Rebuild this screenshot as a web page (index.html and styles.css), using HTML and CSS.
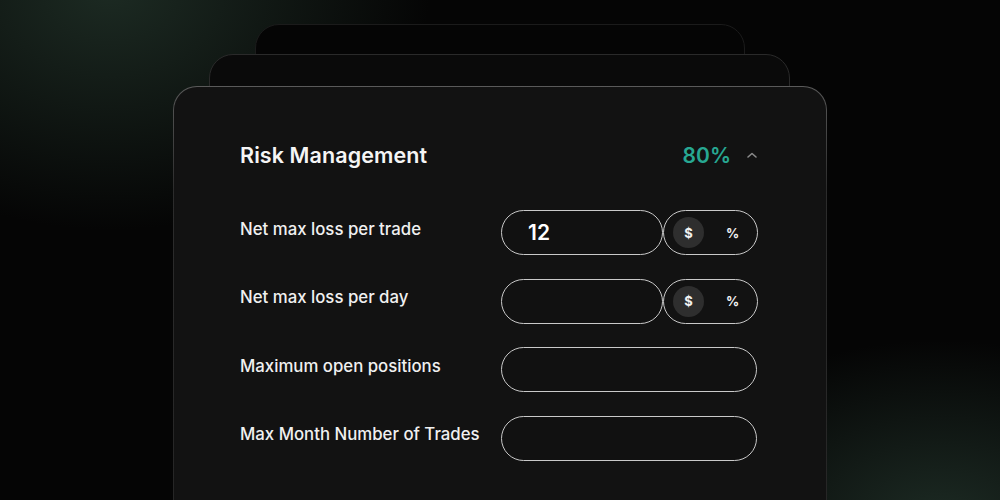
FILE: index.html
```html
<!DOCTYPE html>
<html>
<head>
  <title>Risk Management</title>
  <link rel="stylesheet" href="styles.css">
</head>
<body>
  <div class="stage">
    <div class="ghost ghost-back"></div>
    <div class="ghost ghost-mid"></div>

    <div class="card">
      <div class="card-head">
        <h2 class="card-title">Risk Management</h2>
        <div class="card-status">
          <span class="percent">80%</span>
          <svg class="chevron" width="12" height="8" viewBox="0 0 12 8">
            <path d="M2 6 L6 2.5 L10 6" fill="none" stroke="#8a8a8a" stroke-width="1.6" stroke-linecap="round" stroke-linejoin="round"/>
          </svg>
        </div>
      </div>

      <form class="rules" action="#">
        <label class="rule-label" for="id_trade">Net max loss per trade</label>
        <div class="field split">
          <input class="pill" type="text" id="id_trade" value="12">
          <div class="unit-toggle">
            <span class="unit active">$</span>
            <span class="unit">%</span>
          </div>
        </div>

        <label class="rule-label" for="id_day">Net max loss per day</label>
        <div class="field split">
          <input class="pill" type="text" id="id_day">
          <div class="unit-toggle">
            <span class="unit active">$</span>
            <span class="unit">%</span>
          </div>
        </div>

        <label class="rule-label" for="id_open">Maximum open positions</label>
        <div class="field">
          <input class="pill" type="text" id="id_open">
        </div>

        <label class="rule-label" for="id_month">Max Month Number of Trades</label>
        <div class="field">
          <input class="pill" type="text" id="id_month">
        </div>
      </form>
    </div>
  </div>
</body>
</html>
```

FILE: styles.css
```css
body {
  margin: 0;
  width: 1000px;
  height: 500px;
  overflow: hidden;
  font-family: Inter, "Noto Sans", sans-serif;
  color: #f2f2f2;
  background:
    radial-gradient(ellipse 320px 240px at 110px -10px, rgba(38, 58, 47, 0.7), rgba(38, 58, 47, 0) 100%),
    radial-gradient(ellipse 280px 180px at 940px 520px, rgba(38, 58, 48, 0.7), rgba(38, 58, 48, 0) 100%),
    #050505;
}

.stage {
  position: relative;
  height: 500px;
  padding-top: 86px;
  box-sizing: border-box;
  overflow: hidden;
}

/* stacked cards peeking out behind the main one */
.ghost {
  position: absolute;
  height: 200px;
  border-radius: 24px;
  box-sizing: border-box;
}

.ghost-back {
  top: 24px;
  left: 255px;
  width: 490px;
  background: #050505;
  border: 1px solid #1b1b1b;
}

.ghost-mid {
  top: 54px;
  left: 209px;
  width: 581px;
  background: #0a0a0a;
  border: 1px solid #2a2a2a;
}

.card {
  position: relative;
  margin-left: 173px;
  width: 654px;
  height: 414px;
  box-sizing: border-box;
  padding: 54px 69px 0 66px;
  border: 1px solid transparent;
  border-bottom: 0;
  border-radius: 24px 24px 0 0;
  background:
    linear-gradient(#121212, #121212) padding-box,
    linear-gradient(180deg, #5a5a5a, #2c2c2c 25%, #262626) border-box;
}

.card-head {
  display: flex;
  align-items: center;
  justify-content: space-between;
  height: 28px;
}

.card-title {
  margin: 0;
  font-size: 21.5px;
  font-weight: 600;
  letter-spacing: 0.1px;
  color: #f5f5f5;
}

.card-status {
  display: flex;
  align-items: center;
  gap: 15px;
  margin-right: -1px;
}

.percent {
  font-size: 21px;
  font-weight: 600;
  color: #27a892;
}

.chevron {
  display: block;
}

.rules {
  display: grid;
  grid-template-columns: 1fr 256px;
  row-gap: 23.5px;
  margin-top: 41px;
}

.rule-label {
  align-self: center;
  padding-bottom: 8px;
  font-size: 16.8px;
  font-weight: 500;
  color: #f0f0f0;
}

.field {
  display: flex;
  height: 45px;
}

.pill {
  flex: 1;
  min-width: 0;
  height: 45px;
  box-sizing: border-box;
  padding: 0 0 0 26px;
  border: 1.5px solid #c9c9c9;
  border-radius: 23px;
  background: #111;
  color: #fff;
  font: 600 21px Inter, "Noto Sans", sans-serif;
  outline: none;
}

.split .pill {
  flex: 0 0 162px;
}

.unit-toggle {
  flex: 1;
  display: flex;
  align-items: center;
  padding: 0 9px;
  border: 1.5px solid #c9c9c9;
  border-radius: 23px;
  box-sizing: border-box;
}

.unit {
  width: 31px;
  height: 31px;
  display: flex;
  align-items: center;
  justify-content: center;
  font-size: 13px;
  font-weight: 700;
  color: #f2f2f2;
}

.unit + .unit {
  margin-left: 13px;
}

.unit.active {
  border-radius: 50%;
  background: #2e2e2e;
}
```
